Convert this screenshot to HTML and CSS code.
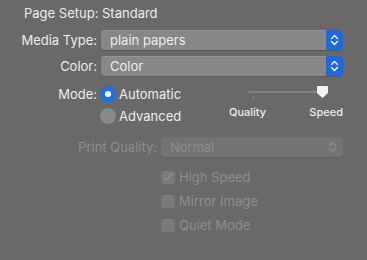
FILE: index.html
```html
<!DOCTYPE html>
<html lang="en">
<head>
    <meta charset="UTF-8">
    <title>Page Setup</title>
    <link rel="stylesheet" href="styles.css">
</head>
<body>
    <div class="panel">
        <div class="title">Page Setup: Standard</div>

        <div class="row">
            <label class="label">Media Type:</label>
            <div class="popup">
                <span class="popup-text">plain papers</span>
                <span class="stepper">
                    <svg width="9" height="12" viewBox="0 0 9 12"><path d="M1.5 4.5 L4.5 1.5 L7.5 4.5 M1.5 7.5 L4.5 10.5 L7.5 7.5" fill="none" stroke="#fff" stroke-width="1.4" stroke-linecap="round" stroke-linejoin="round"/></svg>
                </span>
            </div>
        </div>

        <div class="row">
            <label class="label">Color:</label>
            <div class="popup">
                <span class="popup-text">Color</span>
                <span class="stepper">
                    <svg width="9" height="12" viewBox="0 0 9 12"><path d="M1.5 4.5 L4.5 1.5 L7.5 4.5 M1.5 7.5 L4.5 10.5 L7.5 7.5" fill="none" stroke="#fff" stroke-width="1.4" stroke-linecap="round" stroke-linejoin="round"/></svg>
                </span>
            </div>
        </div>

        <div class="mode">
            <label class="label">Mode:</label>
            <div class="radios">
                <div class="radio-item"><span class="radio on"></span>Automatic</div>
                <div class="radio-item"><span class="radio"></span>Advanced</div>
            </div>
            <div class="slider">
                <div class="track">
                    <span class="tick"></span>
                    <svg class="thumb" width="13" height="14" viewBox="0 0 13 14"><path d="M2 1 H11 Q12 1 12 2 V8 L6.5 13 L1 8 V2 Q1 1 2 1 Z" fill="#f2f2f2"/></svg>
                </div>
                <div class="slider-labels"><span>Quality</span><span>Speed</span></div>
            </div>
        </div>

        <div class="options">
            <div class="row">
                <label class="label wide">Print Quality:</label>
                <div class="popup disabled">
                    <span class="popup-text">Normal</span>
                    <span class="stepper">
                        <svg width="9" height="12" viewBox="0 0 9 12"><path d="M1.5 4.5 L4.5 1.5 L7.5 4.5 M1.5 7.5 L4.5 10.5 L7.5 7.5" fill="none" stroke="#8c8c8c" stroke-width="1.3" stroke-linecap="round" stroke-linejoin="round"/></svg>
                    </span>
                </div>
            </div>
            <div class="checks">
                <div class="check-item">
                    <span class="check"><svg width="12" height="12" viewBox="0 0 12 12"><path d="M2.5 6.5 L5 9 L9.5 2.5" fill="none" stroke="#909090" stroke-width="1.5" stroke-linecap="round" stroke-linejoin="round"/></svg></span>High Speed
                </div>
                <div class="check-item"><span class="check"></span>Mirror Image</div>
                <div class="check-item"><span class="check"></span>Quiet Mode</div>
            </div>
        </div>
    </div>
</body>
</html>
```

FILE: styles.css
```css
body {
    margin: 0;
    background-color: #696969;
    font-family: Inter, "Liberation Sans", sans-serif;
    font-size: 13px;
    color: #ececec;
}
.panel {
    width: 367px;
    height: 260px;
    padding-top: 5px;
    box-sizing: border-box;
}
.title {
    padding-left: 24px;
    line-height: 16px;
    height: 16px;
}
.row {
    display: flex;
    align-items: center;
    height: 20px;
    margin-top: 9px;
}
.row + .row {
    margin-top: 6px;
}
.label {
    width: 101px;
    text-align: right;
    padding-right: 4px;
    box-sizing: border-box;
    flex: none;
}
.popup {
    display: flex;
    align-items: center;
    width: 242px;
    height: 20px;
    background-color: #878787;
    border-radius: 4px;
    box-shadow: inset 0 1px 0 rgba(255, 255, 255, 0.12), 0 1px 1px rgba(0, 0, 0, 0.15);
    overflow: hidden;
}
.popup-text {
    flex: 1;
    padding-left: 9px;
    line-height: 20px;
}
.stepper {
    width: 17px;
    height: 20px;
    background-color: #1f68dd;
    display: flex;
    align-items: center;
    justify-content: center;
}
.mode {
    display: flex;
    margin-top: 9px;
}
.mode .label {
    line-height: 18px;
}
.radios {
    width: 120px;
    margin-left: -1px;
}
.radio-item {
    display: flex;
    align-items: center;
    height: 18px;
    margin-bottom: 4px;
}
.radio {
    width: 16px;
    height: 16px;
    border-radius: 50%;
    background-color: #8a8a8a;
    margin-right: 3px;
    box-sizing: border-box;
    position: relative;
}
.radio.on {
    background-color: #1f6fe5;
}
.radio.on::after {
    content: "";
    position: absolute;
    left: 5px;
    top: 5px;
    width: 6px;
    height: 6px;
    border-radius: 50%;
    background-color: #fff;
}
.slider {
    width: 114px;
    margin-left: 9px;
    font-size: 11px;
    font-weight: 500;
}
.track {
    position: relative;
    margin: 6px 21px 0 19px;
    height: 2px;
    background-color: #808080;
    border-radius: 1px;
}
.tick {
    position: absolute;
    left: 5px;
    top: 5px;
    width: 1px;
    height: 3px;
    background-color: #8a8a8a;
}
.thumb {
    position: absolute;
    right: -7px;
    top: -6px;
}
.slider-labels {
    display: flex;
    justify-content: space-between;
    margin-top: 12px;
}
.options {
    margin-top: 8px;
    padding-left: 60px;
    color: #8d8d8d;
}
.options .row {
    margin-top: 0;
}
.popup.disabled {
    width: 182px;
    background-color: #737373;
    box-shadow: 0 1px 1px rgba(0, 0, 0, 0.08);
}
.popup.disabled .stepper {
    background-color: transparent;
    width: 22px;
}
.checks {
    padding-left: 101px;
    margin-top: 13px;
}
.check-item {
    display: flex;
    align-items: center;
    height: 14px;
    margin-bottom: 10px;
}
.check {
    width: 14px;
    height: 13px;
    background-color: #7a7a7a;
    border-radius: 3px;
    margin-right: 4px;
    display: flex;
    align-items: center;
    justify-content: center;
}
```
